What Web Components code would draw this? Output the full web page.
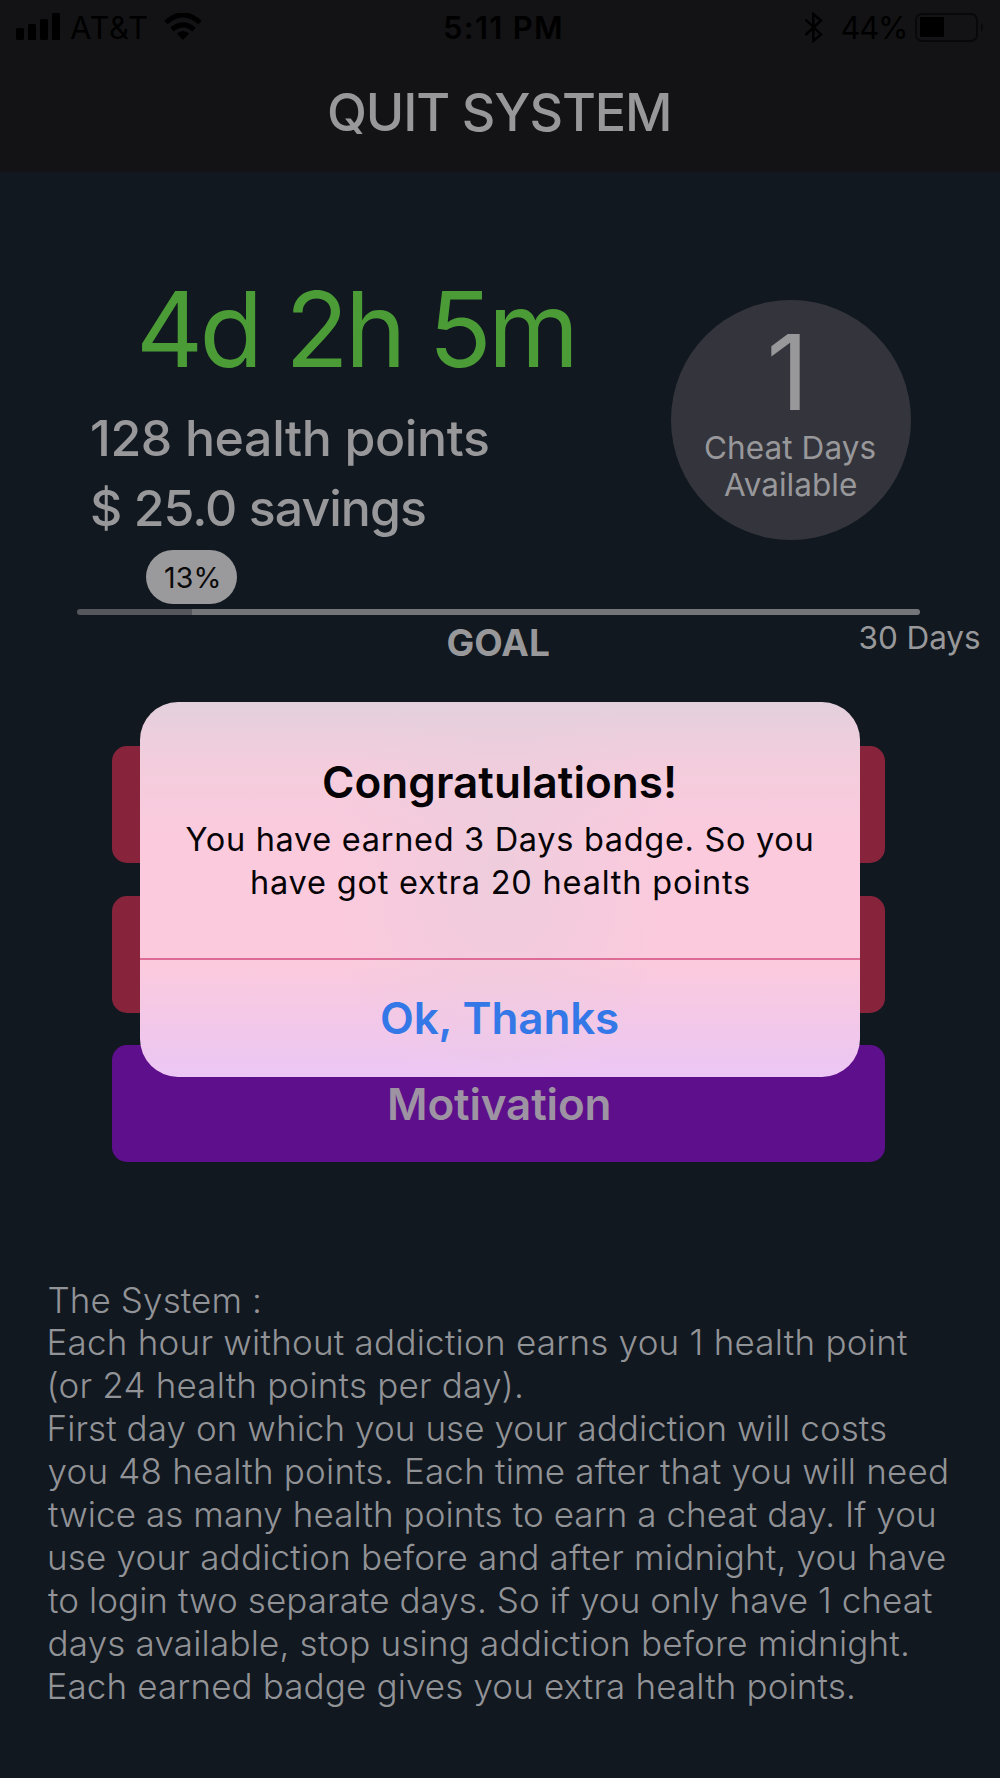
<!DOCTYPE html>
<html lang="en">
<head>
<meta charset="utf-8">
<title>Quit System</title>
<style>
body{margin:0;background:#111820;font-family:Inter,"Liberation Sans",sans-serif;color:#98989b}
</style>
</head>
<body>
<quit-app></quit-app>

<script>
const pen = document.createElement('canvas').getContext('2d');

// One line of text, tracked so that its glyphs span exactly `w` pixels.
class TextLine extends HTMLElement{
constructor(){
super();
this.attachShadow({mode:'open'}).innerHTML = `
<style>
:host{display:block;flex:none;white-space:nowrap}
span{display:block}
</style>
<span><slot></slot></span>
`;
}
connectedCallback(){
const size = +this.getAttribute('size');
const weight = this.getAttribute('weight') || 400;
const w = +this.getAttribute('w');
const text = this.textContent;
pen.font = `${weight} ${size}px Inter, "Liberation Sans", sans-serif`;
const m = pen.measureText(text);
const left = m.actualBoundingBoxLeft / 2;
const ink = left + m.actualBoundingBoxRight;
const track = text.length > 1 ? (w - ink) / (text.length - 1) : 0;
this.style.cssText = `width:${w}px;height:${this.getAttribute('h')}px;line-height:${this.getAttribute('h')}px;font-size:${size}px;font-weight:${weight};letter-spacing:${track.toFixed(3)}px`;
this.shadowRoot.querySelector('span').style.marginLeft = left + 'px';
}
}

class StatusBar extends HTMLElement{
constructor(){
super();
this.attachShadow({mode:'open'}).innerHTML = `
<style>
:host{display:flex;align-items:center;height:55px;padding:0 15px 0 16px;color:#000}
.side{display:flex;align-items:center;flex:1}
.right{justify-content:flex-end}
svg{display:block;flex:none}
.carrier{margin:0 17px 0 10px}
.clock{margin:0 -2px 0 2px}
.level{margin:0 10px 0 18px}
</style>
<div class="side">
<svg width="44" height="29" viewBox="0 0 44 29"><rect y="15" width="8" height="12" rx="1.5"/><rect x="12" y="11" width="8" height="16" rx="1.5"/><rect x="24" y="6" width="8" height="21" rx="1.5"/><rect x="36" y="0" width="8" height="27" rx="1.5"/></svg>
<text-line class="carrier" size="31" w="77" h="55">AT&amp;T</text-line>
<svg width="38" height="29" viewBox="0 0 38 29"><g fill="none" stroke="#000" stroke-width="5"><path d="M2 9.5Q19-5.5 36 9.5"/><path d="M8 16.5Q19 7.2 30 16.5"/></g><path d="M12.8 20.6Q19 15.5 25.2 20.6L19 27Z"/></svg>
</div>
<text-line class="clock" size="31" weight="600" w="117" h="55">5:11 PM</text-line>
<div class="side right">
<svg width="19" height="31" viewBox="0 0 19 31"><path d="M1.5 7.5L17 22.5L9.3 29V2L17 8.5L1.5 23" fill="none" stroke="#000" stroke-width="2.4"/></svg>
<text-line class="level" size="31" w="64" h="55">44%</text-line>
<svg width="70" height="29" viewBox="0 0 70 29"><rect x="1" y="1" width="61" height="27" rx="6" fill="none" stroke="#08080a" stroke-width="1.8"/><rect x="5" y="4" width="24" height="20" rx="1"/><path d="M66 10Q70 14.500 66 19Z" fill="#08080a"/></svg>
</div>
`;
}
}

class NavHeader extends HTMLElement{
constructor(){
super();
this.attachShadow({mode:'open'}).innerHTML = `
<style>
:host{display:block;height:172px;background:#131315}
.title{display:flex;justify-content:center;padding-right:3px}
</style>
<status-bar></status-bar>
<div class="title"><slot></slot></div>
`;
}
}

class CheatBadge extends HTMLElement{
constructor(){
super();
this.attachShadow({mode:'open'}).innerHTML = `
<style>
:host{display:flex;flex-direction:column;align-items:center;box-sizing:border-box;width:240px;height:240px;padding-top:12px;border-radius:50%;background:#34353c}
.count{margin-right:15px}
.first{margin-top:-3px}
text-line + text-line{margin-right:2px}
</style>
<text-line class="count" size="104" w="30" h="120">1</text-line>
<text-line class="first" size="31.500" w="171" h="37">Cheat Days</text-line>
<text-line size="31.500" w="132" h="37">Available</text-line>
`;
}
}

class GoalMeter extends HTMLElement{
constructor(){
super();
this.attachShadow({mode:'open'}).innerHTML = `
<style>
:host{display:block}
.pill{display:flex;justify-content:center;width:91px;height:54px;margin-left:146px;border-radius:27px;background:#9a999b;color:#0a0a0a}
.track{width:843px;height:6px;margin:5px 0 0 77px;border-radius:3px;background:linear-gradient(90deg,#56575c 115px,#747578 115px)}
.labels{display:flex;align-items:flex-start;gap:310px;padding-left:447px}
</style>
<div class="pill"><text-line size="28.500" w="54" h="55">13%</text-line></div>
<div class="track"></div>
<div class="labels">
<text-line size="37" weight="700" w="102" h="55">GOAL</text-line>
<text-line size="31.500" w="121" h="46">30 Days</text-line>
</div>
`;
}
}

class ActionButton extends HTMLElement{
constructor(){
super();
this.attachShadow({mode:'open'}).innerHTML = `
<style>
:host{display:flex;justify-content:center;height:117px;border-radius:15px;background:#87243c;color:#9d93a3}
:host([kind=motivation]){background:#5e0f8b}
</style>
<slot></slot>
`;
}
}

class SystemNotes extends HTMLElement{
constructor(){
super();
const lines = [
['The System :', 211],
['Each hour without addiction earns you 1 health point', 859],
['(or 24 health points per day).', 473],
['First day on which you use your addiction will costs', 838],
['you 48 health points. Each time after that you will need', 899],
['twice as many health points to earn a cheat day. If you', 886],
['use your addiction before and after midnight, you have', 897],
['to login two separate days. So if you only have 1 cheat', 884],
['days available, stop using addiction before midnight.', 859],
['Each earned badge gives you extra health points.', 805]
];
this.attachShadow({mode:'open'}).innerHTML = `
<style>
:host{display:block;padding-left:48px;color:#929397}
</style>
${lines.map(([text, w]) => `<text-line size="35" weight="300" w="${w}" h="42.96">${text}</text-line>`).join('')}
`;
}
}

class AlertDialog extends HTMLElement{
constructor(){
super();
this.attachShadow({mode:'open'}).innerHTML = `
<style>
:host{position:absolute;left:140px;top:702px;width:720px;height:375px;border-radius:38px;overflow:hidden;color:#050305;
background:radial-gradient(ellipse 170px 240px at 50% 45%,rgba(230,206,220,.6),rgba(230,206,220,0)),
linear-gradient(180deg,#e3d0dc 0,#f3cddd 16%,#fbcadd 38%,#fbcadd 70%,#eec7ef 94%,#edc7f5 100%)}
.body{display:flex;flex-direction:column;align-items:center;box-sizing:border-box;height:258px;padding-top:51px;border-bottom:2px solid #dc6b96}
.heading{margin-right:3px}
.msg{margin:7px 3px 0 0}
.ok{display:flex;justify-content:center;height:117px;color:#3478e8}
</style>
<div class="body">
<text-line class="heading" size="44" weight="600" w="351" h="58">Congratulations!</text-line>
<text-line class="msg" size="32.500" w="626" h="43">You have earned 3 Days badge. So you</text-line>
<text-line size="32.500" w="498" h="43">have got extra 20 health points</text-line>
</div>
<div class="ok"><text-line size="44" weight="600" w="238" h="117">Ok, Thanks</text-line></div>
`;
}
}

class QuitApp extends HTMLElement{
constructor(){
super();
this.attachShadow({mode:'open'}).innerHTML = `
<style>
:host{display:block;position:relative;width:1000px;height:1778px;overflow:hidden}
.hero{display:flex;justify-content:space-between;height:281px;padding:97px 89px 0 91px}
.time{margin-left:48px;color:#4b9b37}
.points{margin-top:14.5px}
cheat-badge{margin-top:31px}
.actions{display:grid;gap:32.500px;margin:76px 115px 0 112px}
system-notes{margin-top:116.500px}
</style>
<nav-header><text-line size="52" weight="500" w="341" h="116">QUIT SYSTEM</text-line></nav-header>
<div class="hero">
<div>
<text-line class="time" size="104" w="433" h="120">4d 2h 5m</text-line>
<text-line class="points" size="50" weight="500" w="397" h="69.5">128 health points</text-line>
<text-line size="50" weight="500" w="334" h="70">$ 25.0 savings</text-line>
</div>
<cheat-badge></cheat-badge>
</div>
<goal-meter></goal-meter>
<div class="actions">
<action-button></action-button>
<action-button></action-button>
<action-button kind="motivation"><text-line size="44" weight="600" w="220" h="118">Motivation</text-line></action-button>
</div>
<system-notes></system-notes>
<alert-dialog></alert-dialog>
`;
}
}

customElements.define('text-line', TextLine);
customElements.define('status-bar', StatusBar);
customElements.define('nav-header', NavHeader);
customElements.define('cheat-badge', CheatBadge);
customElements.define('goal-meter', GoalMeter);
customElements.define('action-button', ActionButton);
customElements.define('system-notes', SystemNotes);
customElements.define('alert-dialog', AlertDialog);
customElements.define('quit-app', QuitApp);
</script>
</body>
</html>
